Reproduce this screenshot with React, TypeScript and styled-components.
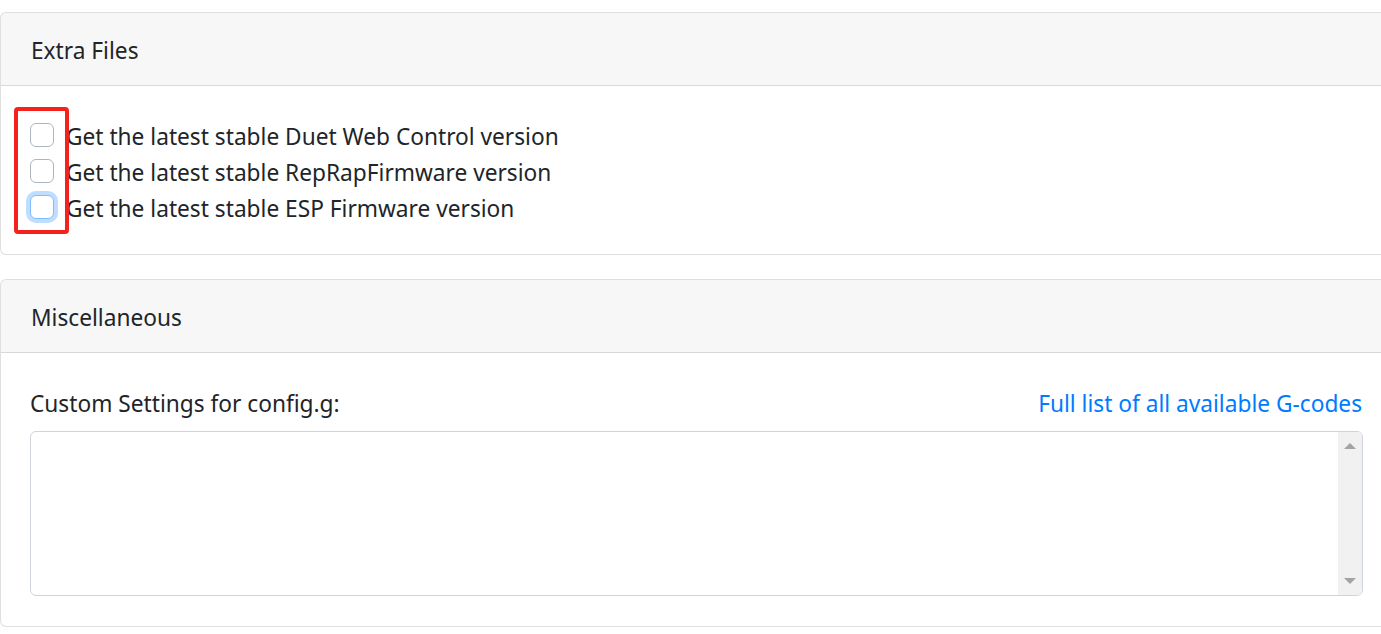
import React from "react";
import styled, { createGlobalStyle } from "styled-components";

const GlobalStyle = createGlobalStyle`
  html, body {
    margin: 0;
    padding: 0;
    background: #fff;
    overflow: hidden;
  }
  body {
    font-family: "Noto Sans", "Open Sans", Arial, sans-serif;
    font-size: 22.7px;
    line-height: 36px;
    color: #212529;
  }
  * { box-sizing: border-box; }
`;

const Page = styled.div`
  width: 1393px;
  padding-top: 12px;
  display: flex;
  flex-direction: column;
  gap: 24px;
`;

const Card = styled.section`
  position: relative;
  border: 1px solid rgba(0, 0, 0, 0.125);
  border-radius: 6px;
  background: #fff;
`;

const CardHeader = styled.div`
  padding: 20px 30px 16px;
  background: rgba(0, 0, 0, 0.03);
  border-bottom: 1px solid rgba(0, 0, 0, 0.125);
  border-radius: 5px 5px 0 0;
`;

const CardBody = styled.div`
  padding: 30px 29px;
`;

const CheckRow = styled.label`
  display: flex;
  align-items: flex-start;
  gap: 12px;
  height: 36px;
`;

const CheckText = styled.span`
  padding-top: 3px;
`;

const Box = styled.span<{ $focused?: boolean }>`
  flex: none;
  width: 24px;
  height: 24px;
  margin-top: 7px;
  border-radius: 6px;
  border: 1px solid ${(p) => (p.$focused ? "#80bdff" : "#adb5bd")};
  background: #fff;
  box-shadow: ${(p) => (p.$focused ? "0 0 0 4px rgba(0, 123, 255, 0.25)" : "none")};
`;

const Highlight = styled.div`
  position: absolute;
  left: 13px;
  top: 94px;
  width: 55px;
  height: 127px;
  border: 4px solid #f5211c;
  border-radius: 4px;
  pointer-events: none;
`;

const LabelRow = styled.div`
  display: flex;
  justify-content: space-between;
  align-items: flex-start;
  height: 36px;
  padding-top: 3px;
  margin-bottom: 12px;
  padding-right: 1px;
`;

const Link = styled.a`
  color: #007bff;
  text-decoration: none;
`;

const Field = styled.div`
  position: relative;
`;

const TextArea = styled.textarea`
  display: block;
  width: 100%;
  height: 165px;
  border: 1px solid #ced4da;
  border-radius: 6px;
  resize: none;
  font: inherit;
  padding: 9px 42px 9px 18px;
  outline: none;
`;

const ScrollBar = styled.div`
  position: absolute;
  top: 1px;
  bottom: 1px;
  right: 1px;
  width: 24px;
  background: #f1f1f1;
  border-radius: 0 5px 5px 0;
  display: flex;
  flex-direction: column;
  justify-content: space-between;
  align-items: center;
  padding: 11px 0 11px;
  pointer-events: none;
`;

const Arrow = styled.span<{ $down?: boolean }>`
  width: 0;
  height: 0;
  border-left: 6px solid transparent;
  border-right: 6px solid transparent;
  ${(p) =>
    p.$down ? "border-top: 6px solid #a3a3a3;" : "border-bottom: 6px solid #a3a3a3;"}
`;

const options = [
  "Get the latest stable Duet Web Control version",
  "Get the latest stable RepRapFirmware version",
  "Get the latest stable ESP Firmware version",
];

export default function App() {
  return (
    <>
      <GlobalStyle />
      <Page>
        <Card>
          <CardHeader>Extra Files</CardHeader>
          <CardBody>
            {options.map((text, i) => (
              <CheckRow key={text}>
                <Box $focused={i === 2} />
                <CheckText>{text}</CheckText>
              </CheckRow>
            ))}
          </CardBody>
          <Highlight />
        </Card>
        <Card>
          <CardHeader>Miscellaneous</CardHeader>
          <CardBody>
            <LabelRow>
              <span>Custom Settings for config.g:</span>
              <Link href="#">Full list of all available G-codes</Link>
            </LabelRow>
            <Field>
              <TextArea />
              <ScrollBar>
                <Arrow />
                <Arrow $down />
              </ScrollBar>
            </Field>
          </CardBody>
        </Card>
      </Page>
    </>
  );
}
